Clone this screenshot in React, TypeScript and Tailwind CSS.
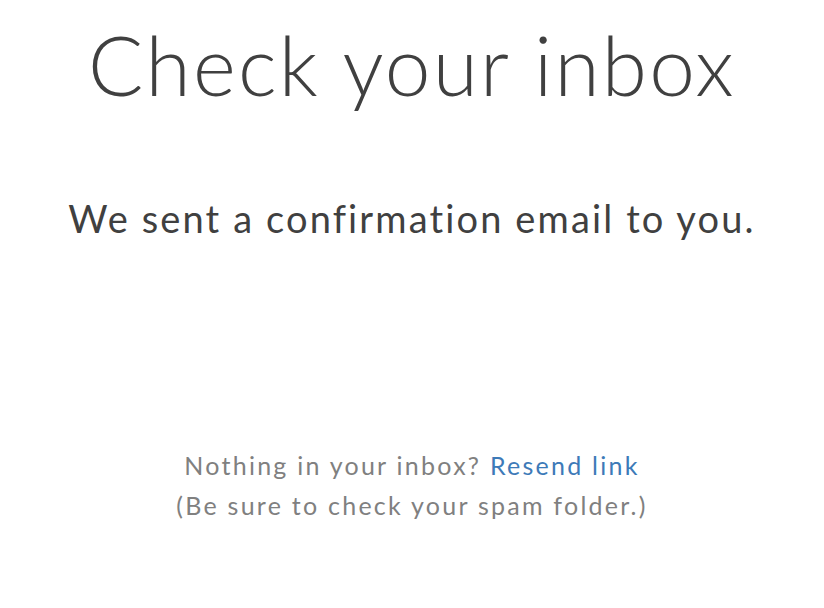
export default function App() {
  return (
    <div className="min-h-[608px] w-full bg-white font-['Lato',sans-serif] text-center [font-variant-ligatures:none]">
      <h1 className="pt-[14px] text-[82px] font-light leading-[100px] tracking-[0.027em] text-[#404040]">
        Check your inbox
      </h1>
      <p className="mt-[80px] text-[38px] leading-[48px] tracking-[0.056em] text-[#404040]">
        We sent a confirmation email to you.
      </p>
      <div className="mt-[203px] text-[25px] leading-[40px] tracking-[0.09em] text-[#808080]">
        <p>
          Nothing in your inbox?{" "}
          <a href="#" className="text-[#3d7ab8]">
            Resend link
          </a>
        </p>
        <p>(Be sure to check your spam folder.)</p>
      </div>
    </div>
  );
}
